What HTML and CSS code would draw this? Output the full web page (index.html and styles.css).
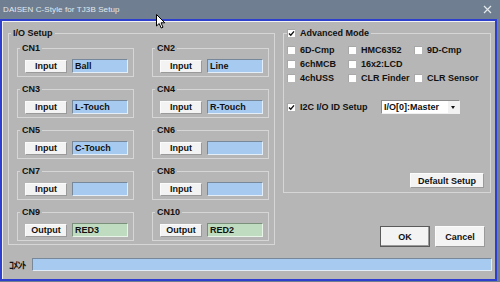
FILE: index.html
```html
<!DOCTYPE html>
<html lang="ja">
<head>
    <meta charset="UTF-8">
    <title>DAISEN C-Style for TJ3B Setup</title>
    <link rel="stylesheet" href="styles.css">
</head>
<body>
    <!-- Title bar -->
    <div class="titlebar">
        <span class="title">DAISEN C-Style for TJ3B Setup</span>
        <svg class="close" width="9" height="9" viewBox="0 0 9 9">
            <path d="M1 1 L8 8 M8 1 L1 8" stroke="#e4e9ee" stroke-width="1.2"/>
        </svg>
    </div>

    <svg class="cursor" width="10" height="15" viewBox="0 0 10 15">
        <path d="M0.5 0.5 L0.5 12 L3.2 9.5 L5.2 14 L7 13.2 L5 8.8 L8.8 8.8 Z" fill="#fff" stroke="#000" stroke-width="1"/>
    </svg>

    <div class="window">
        <div class="main">
            <!-- I/O Setup -->
            <fieldset class="group io">
                <legend>I/O Setup</legend>
                <div class="ports">
                    <fieldset class="port">
                        <legend>CN1</legend>
                        <div class="port-row"><button class="btn">Input</button><input class="field" type="text" value="Ball"></div>
                    </fieldset>
                    <fieldset class="port">
                        <legend>CN2</legend>
                        <div class="port-row"><button class="btn">Input</button><input class="field" type="text" value="Line"></div>
                    </fieldset>
                    <fieldset class="port">
                        <legend>CN3</legend>
                        <div class="port-row"><button class="btn">Input</button><input class="field" type="text" value="L-Touch"></div>
                    </fieldset>
                    <fieldset class="port">
                        <legend>CN4</legend>
                        <div class="port-row"><button class="btn">Input</button><input class="field" type="text" value="R-Touch"></div>
                    </fieldset>
                    <fieldset class="port">
                        <legend>CN5</legend>
                        <div class="port-row"><button class="btn">Input</button><input class="field" type="text" value="C-Touch"></div>
                    </fieldset>
                    <fieldset class="port">
                        <legend>CN6</legend>
                        <div class="port-row"><button class="btn">Input</button><input class="field" type="text" value=""></div>
                    </fieldset>
                    <fieldset class="port">
                        <legend>CN7</legend>
                        <div class="port-row"><button class="btn">Input</button><input class="field" type="text" value=""></div>
                    </fieldset>
                    <fieldset class="port">
                        <legend>CN8</legend>
                        <div class="port-row"><button class="btn">Input</button><input class="field" type="text" value=""></div>
                    </fieldset>
                    <fieldset class="port">
                        <legend>CN9</legend>
                        <div class="port-row"><button class="btn">Output</button><input class="field out" type="text" value="RED3"></div>
                    </fieldset>
                    <fieldset class="port">
                        <legend>CN10</legend>
                        <div class="port-row"><button class="btn">Output</button><input class="field out" type="text" value="RED2"></div>
                    </fieldset>
                </div>
            </fieldset>

            <div class="side">
                <!-- Advanced Mode -->
                <fieldset class="group adv">
                    <legend><span class="check on"><svg width="7" height="7" viewBox="0 0 7 7"><path d="M1 3.4 L2.8 5.2 L6 1.4" fill="none" stroke="#111" stroke-width="1.4"/></svg></span>Advanced Mode</legend>
                    <div class="options">
                        <label class="opt"><span class="check"></span>6D-Cmp</label>
                        <label class="opt"><span class="check"></span>HMC6352</label>
                        <label class="opt"><span class="check"></span>9D-Cmp</label>
                        <label class="opt"><span class="check"></span>6chMCB</label>
                        <label class="opt"><span class="check"></span>16x2:LCD</label>
                        <span></span>
                        <label class="opt"><span class="check"></span>4chUSS</label>
                        <label class="opt"><span class="check"></span>CLR Finder</label>
                        <label class="opt"><span class="check"></span>CLR Sensor</label>
                    </div>
                    <div class="i2c">
                        <span class="check on"><svg width="7" height="7" viewBox="0 0 7 7"><path d="M1 3.4 L2.8 5.2 L6 1.4" fill="none" stroke="#111" stroke-width="1.4"/></svg></span>
                        <span class="i2c-label">I2C I/O ID Setup</span>
                        <div class="select">
                            <span class="select-text">I/O[0]:Master</span>
                            <span class="select-arrow"></span>
                        </div>
                    </div>
                    <div class="default-row">
                        <button class="btn wide">Default Setup</button>
                    </div>
                </fieldset>

                <div class="actions">
                    <button class="btn big ok">OK</button>
                    <button class="btn big">Cancel</button>
                </div>
            </div>
        </div>

        <!-- Comment -->
        <div class="comment">
            <span class="comment-label">ｺﾒﾝﾄ</span>
            <input class="field long" type="text" value="">
        </div>
    </div>
</body>
</html>
```

FILE: styles.css
```css
/* General */
body {
    margin: 0;
    width: 500px;
    height: 282px;
    overflow: hidden;
    background: #6f7f91;
    font-family: "Liberation Sans", Arial, sans-serif;
    font-size: 9px;
    font-weight: bold;
    color: #111;
    position: relative;
}

/* Title bar */
.titlebar {
    height: 19px;
    display: flex;
    align-items: center;
    justify-content: space-between;
    padding: 0 8px 0 3px;
}

.title {
    font-size: 8px;
    font-weight: normal;
    color: #e2e8ee;
    letter-spacing: 0.1px;
}

.cursor {
    position: absolute;
    left: 156px;
    top: 14px;
}

/* Dialog body */
.window {
    box-sizing: border-box;
    width: 497px;
    height: 262px;
    border: 2px solid #2d3fcc;
    background: #b6b6b6;
    box-shadow: inset 1px 1px 0 #f2f2f2;
    padding: 7px 3px 0 6px;
}

.main {
    display: flex;
    gap: 8px;
    align-items: flex-start;
}

/* Group boxes */
fieldset {
    margin: 0;
    min-width: 0;
    box-sizing: border-box;
    border: 1px solid #d6d6d6;
}

legend {
    font-size: 9px;
    line-height: 10px;
    padding: 0 2px;
}

.io {
    width: 267px;
    padding: 5px 5px 3px 8px;
}

.io > legend {
    margin-left: -6px;
}

.ports {
    display: grid;
    grid-template-columns: 117px 117px;
    column-gap: 18px;
    row-gap: 7px;
}

.port {
    width: 117px;
    padding: 6px 5px 3px 7px;
}

.port > legend {
    margin-left: -5px;
}

.port-row {
    display: flex;
    align-items: center;
    gap: 5px;
    height: 14px;
}

/* Buttons */
.btn {
    box-sizing: border-box;
    width: 42px;
    height: 13px;
    padding: 0;
    font: inherit;
    color: #111;
    background: #f3f3f3;
    border: 1px solid;
    border-color: #fbfbfb #9a9a9a #9a9a9a #fbfbfb;
}

.btn.wide {
    width: 74px;
    height: 15px;
}

.btn.big {
    width: 50px;
    height: 21px;
}

.btn.ok {
    border: 1px solid #5a5a5a;
    box-shadow: inset -1px -1px 0 #9a9a9a;
}

/* Text fields */
.field {
    box-sizing: border-box;
    width: 56px;
    height: 14px;
    padding: 0 0 0 2px;
    margin: 0;
    font: inherit;
    color: #111;
    background: #a6caf0;
    border: 1px solid;
    border-color: #76889a #e4eef8 #e4eef8 #76889a;
    outline: none;
}

.field.out {
    background: #c0dcc0;
    border-color: #7a907a #e8f4e8 #e8f4e8 #7a907a;
}

/* Advanced Mode */
.side {
    width: 208px;
}

.adv {
    width: 208px;
    padding: 5px 6px 4px 3px;
}

.adv > legend {
    padding: 0 2px 0 0;
}

.check {
    box-sizing: border-box;
    display: inline-block;
    width: 8px;
    height: 8px;
    background: #fff;
    border-top: 1px solid #a8a8a8;
    border-left: 1px solid #a8a8a8;
    vertical-align: -1px;
    margin-right: 5px;
    position: relative;
}

.check svg {
    position: absolute;
    left: 0;
    top: 0;
}

.options {
    display: grid;
    grid-template-columns: 61px 66px auto;
    grid-auto-rows: 14px;
    align-items: center;
}

.opt {
    display: flex;
    align-items: center;
    white-space: nowrap;
}

.i2c {
    margin-top: 15px;
    height: 14px;
    display: flex;
    align-items: center;
}

.i2c-label {
    width: 81px;
}

.select {
    box-sizing: border-box;
    width: 79px;
    height: 14px;
    display: flex;
    background: #fff;
    border: 1px solid;
    border-color: #8a8a8a #f0f0f0 #f0f0f0 #8a8a8a;
}

.select-text {
    flex: 1;
    line-height: 12px;
    padding-left: 2px;
}

.select-arrow {
    width: 11px;
    background: #f2f2f2;
    position: relative;
}

.select-arrow::after {
    content: "";
    position: absolute;
    left: 3px;
    top: 5px;
    border-left: 2.5px solid transparent;
    border-right: 2.5px solid transparent;
    border-top: 3px solid #111;
}

.default-row {
    margin-top: 59px;
    display: flex;
    justify-content: flex-end;
}

.actions {
    margin-top: 33px;
    padding-right: 6px;
    display: flex;
    justify-content: flex-end;
    gap: 5px;
}

/* Comment row */
.comment {
    margin-top: 10px;
    display: flex;
    align-items: center;
}

.comment-label {
    width: 24px;
    padding-left: 1px;
    box-sizing: border-box;
    font-family: "Noto Sans CJK JP", sans-serif;
    font-size: 10px;
    font-weight: bold;
    letter-spacing: -0.8px;
}

.field.long {
    width: 460px;
    height: 13px;
}
```
